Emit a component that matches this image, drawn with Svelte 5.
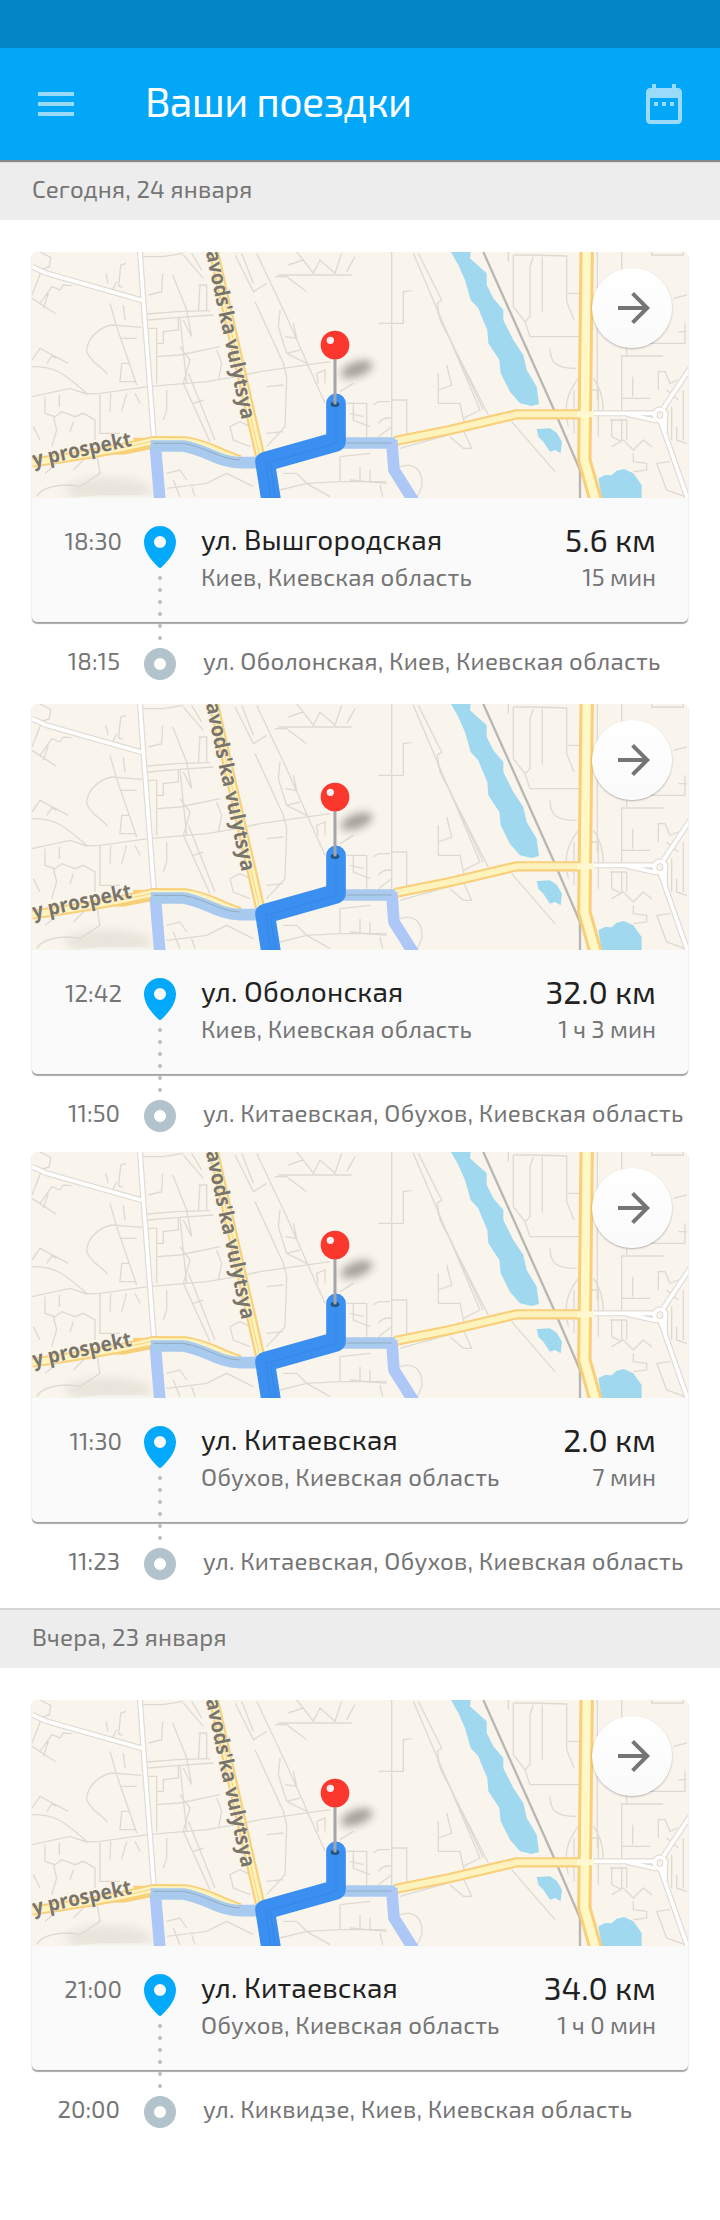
<script>
  const days = [
    {
      label: 'Сегодня, 24 января',
      trips: [
        { end: '18:30', street: 'ул. Вышгородская', area: 'Киев, Киевская область', distance: '5.6 км', duration: '15 мин', start: '18:15', from: 'ул. Оболонская, Киев, Киевская область' },
        { end: '12:42', street: 'ул. Оболонская', area: 'Киев, Киевская область', distance: '32.0 км', duration: '1 ч 3 мин', start: '11:50', from: 'ул. Китаевская, Обухов, Киевская область' },
        { end: '11:30', street: 'ул. Китаевская', area: 'Обухов, Киевская область', distance: '2.0 км', duration: '7 мин', start: '11:23', from: 'ул. Китаевская, Обухов, Киевская область' }
      ]
    },
    {
      label: 'Вчера, 23 января',
      trips: [
        { end: '21:00', street: 'ул. Китаевская', area: 'Обухов, Киевская область', distance: '34.0 км', duration: '1 ч 0 мин', start: '20:00', from: 'ул. Киквидзе, Киев, Киевская область' }
      ]
    }
  ];
  const dots = [2, 14, 26, 38, 50, 62];
</script>

<svg class="defs" width="0" height="0" aria-hidden="true">
  <defs>
    <filter id="soft" x="-50%" y="-50%" width="200%" height="200%"><feGaussianBlur stdDeviation="12" /></filter>
    <symbol id="trip-map" viewBox="36 36 1968 738">
      <rect x="36" y="36" width="1968" height="738" fill="#f9f5ed" />
      <ellipse cx="265" cy="750" rx="130" ry="38" fill="#e9e5dc" filter="url(#soft)" />
      <path d="M165 775Q200 766 260 766H370Q395 766 400 775Z" fill="#f6f3ec" />
      <g class="minor">
        <path d="M60 36L92 52L88 80L66 88L36 165M66 88L50 130M36 175L108 222M60 190L96 140L120 150L130 135L155 137M70 205L85 160M318 70L302 76L296 138L310 142M258 100L264 130M278 150L290 125" />
        <path d="M365 50H430L490 40M385 165L425 155L428 100M382 222L470 215L570 212M382 240L480 232L580 225M490 45L550 115M515 40L545 90M458 105L500 210L515 290M535 135H560V210M540 135L535 215M385 265H410V310H430V275L475 270V235M410 310V430M410 350L480 345L600 320M480 235L500 430M515 290L490 240" />
        <path d="M385 440L560 425L650 410L720 395L930 365M36 470L150 445L200 462L240 460L385 440M36 360L60 325L145 370M36 380C110 380 130 400 200 460M80 370L95 348L110 355M365 262L275 255C230 265 200 300 200 335C215 370 240 375 262 402M270 190L290 260L350 435M310 195L315 240M300 295H350M330 370H305L300 425H345M320 460L305 515M345 460L360 490M272 460L270 515" />
        <path d="M75 470V520L105 530L125 515L165 530L190 520L225 540V600M240 460V580H300M100 530L110 570L95 620M60 600L40 560M118 465V500M150 575L160 545M480 320L510 360L490 430L570 605M505 400L585 600M440 450V510L430 540M590 330L605 370L595 420M520 490L550 480" />
        <path d="M645 45L700 155L740 130M665 40L700 130M710 40L800 230L915 490M705 185L790 370L800 410L795 560L740 620M765 110H800L860 155M775 105H995M805 75L850 60L830 36M850 60L880 100L900 60L945 100L965 40M1005 50L980 95M780 210L775 260L800 340L840 330M795 290L830 295L820 250M800 340L860 370M895 430L890 400L915 390V430M630 560L660 545L690 560M630 560L640 600L690 620M740 440L790 435M980 490H1000V540L1050 560M960 455L1000 430M740 580L790 575" />
        <path d="M50 770Q70 735 150 735L180 740L240 700L230 640M75 700L100 680M160 690L200 650M440 745L560 730L620 700L700 740M460 720L480 770M515 740L525 770M440 700L480 690L500 720M780 750L860 730L960 725H1100M960 650V725M960 650L1050 640M860 730L830 700H790M860 730L930 770M700 650L730 700" />
      </g>
      <g class="minor" transform="translate(990)">
        <path d="M125 36V595M85 250H160V155L185 152M190 40L390 510L340 535M205 40L275 180L262 190L270 240L415 525M262 215L400 510M490 45H550L650 48V185L672 240M490 45V200L525 245L540 290H705M550 50L540 80V230L525 245M577 50V215M600 325C600 370 620 385 680 385M655 160H690M475 36V65M685 415C650 460 640 500 655 560M672 450V580M730 415C750 440 760 480 760 510M742 36V480M720 450H745V590" />
        <path d="M815 36V90M905 36V45H1000V36M815 348H940M815 345V510M830 345V325M815 475H900M848 410V470M830 310H1005V250M925 450V395H945L960 430L985 420M1010 165L970 175M1010 275H985M265 400V490H330L345 560M290 375L305 435L265 450M485 545L615 695M300 590L340 625H365L335 560M0 490H50V590M0 520L40 530M70 495L85 485H120M85 550Q100 530 125 535M125 480H170V590M85 590L125 560M0 720L110 730M30 680V720M60 690V730M150 680C200 665 220 700 215 740L200 775M90 735L98 770M150 625L400 555" />
        <path d="M785 620L820 600L850 630L880 600L905 620M850 640V665L890 670V690L850 695M920 670L960 665M920 670L950 750L1005 770M785 540V590L815 605M815 540V600M830 540V600M980 560V600L1010 610M780 540H830M965 500V600M1000 450V600M950 450L985 480" />
      </g>
      <g class="lane-edge"><path d="M36 80L80 100L370 182M360 36L370 180L402 600" /></g>
      <g class="lane"><path d="M36 80L80 100L370 182M360 36L370 180L402 600" /></g>
      <g class="lane-edge" transform="translate(990)"><path d="M730 520H920M830 522L920 542M940 505L1020 385M930 540L1016 785M945 585V520" /><circle cx="930" cy="525" r="17" /></g>
      <g class="lane" transform="translate(990)"><path d="M730 520H920M830 522L920 542M940 505L1020 385M930 540L1016 785M945 585V520" /><circle cx="930" cy="525" r="17" /></g>

      <g fill="#9fd8ef" transform="translate(990)">
        <path d="M303 36H362L360 55L410 100V135L430 175L460 210V240L490 300L520 345L530 390L560 440L567 492L545 498L510 490L480 455L452 400L448 360L415 310L412 270L395 230L385 205L362 180L345 120L325 75Z" />
        <path d="M560 567L600 565L620 578L636 605L632 640L615 630L600 635L580 605L565 590Z" />
        <path d="M745 715L765 705L785 706L800 692L822 687L850 700L875 735V775H755Z" />
      </g>
      <path d="M1390 36L1600 505L1680 690V775" fill="none" stroke="#b9b7b3" stroke-width="7" />

      <g class="gold">
        <path d="M580 30L722 655" />
        <path d="M1125 603L1290 570L1490 523H1695" />
      </g>
      <path class="gold-wide" d="M1700 36L1693 660L1728 785" />
      <path d="M36 668Q180 648 300 625L400 603L500 604C560 612 610 645 660 660" fill="none" stroke="#f9cf79" stroke-width="30" />
      <path d="M250 638L310 640L400 622M340 597L400 598" fill="none" stroke="#f9cf79" stroke-width="8" />
      <g class="cream">
        <path d="M36 668Q180 648 300 625L400 603L500 604C560 612 610 645 660 660" />
        <path d="M580 30L722 655" />
        <path d="M1125 603L1290 570L1490 523H1695" />
      </g>
      <path class="cream-wide" d="M1700 36L1693 660L1728 785" />
      <path d="M1672 523H1722" fill="none" stroke="#fff8d0" stroke-width="18" />
      <path d="M592 90L717 640M300 625L400 603" fill="none" stroke="#f8d280" stroke-width="3" />

      <g fill="none" stroke-linejoin="round" stroke-width="35">
        <path d="M406 618L420 785" stroke="#adc8f7" />
        <path d="M392 618H490C560 630 600 668 660 668H720M950 609H1125" stroke="#a9caef" />
        <path d="M1115 600L1122 690L1182 785" stroke="#adc8f7" />
      </g>
      <path d="M400 610H490C560 622 600 658 660 660M980 609H1115" fill="none" stroke="#92aabd" stroke-width="3" />
      <path d="M754 785L735 665L948 605V490" fill="none" stroke="#3a8ff1" stroke-width="59" stroke-linejoin="round" stroke-linecap="round" />
      <path d="M754 785L738 670L948 610V500M768 785L752 675" fill="none" stroke="#3687e4" stroke-width="3" />

      <g class="road-name">
        <text transform="translate(551 8) rotate(77.9)" textLength="545" lengthAdjust="spacingAndGlyphs">zavods'ka vulytsya</text>
        <text transform="translate(42 680) rotate(-12)" textLength="302" lengthAdjust="spacingAndGlyphs">y prospekt</text>
      </g>

      <ellipse cx="1010" cy="388" rx="50" ry="22" transform="rotate(-20 1010 388)" fill="#77736c" opacity=".65" filter="url(#soft)" />
      <ellipse cx="945" cy="493" rx="13" ry="8" fill="#225383" />
      <path d="M945 350V493" stroke="#a3a5a8" stroke-width="9" />
      <circle cx="945" cy="315" r="43" fill="#fc382e" />
      <circle cx="931" cy="301" r="11" fill="#fff" opacity=".92" />
    </symbol>
  </defs>
</svg>

<div class="screen">
  <div class="status"></div>
  <header>
    <svg class="icon" viewBox="0 0 24 24"><path d="M3 18h18v-2H3v2zm0-5h18v-2H3v2zm0-7v2h18V6H3z" /></svg>
    <h1>Ваши поездки</h1>
    <svg class="icon" viewBox="0 0 24 24"><path d="M9 11H7v2h2v-2zm4 0h-2v2h2v-2zm4 0h-2v2h2v-2zm2-7h-1V2h-2v2H8V2H6v2H5c-1.11 0-1.99.9-1.99 2L3 20c0 1.1.89 2 2 2h14c1.1 0 2-.9 2-2V6c0-1.1-.9-2-2-2zm0 16H5V9h14v11z" /></svg>
  </header>

  {#each days as day}
    <section>
      <h2>{day.label}</h2>
      {#each day.trips as trip}
        <article>
          <div class="card">
            <div class="map">
              <svg width="656" height="246"><use href="#trip-map" width="656" height="246" /></svg>
              <button aria-label="Открыть">
                <svg viewBox="0 0 24 24" width="48" height="48"><path d="M12 4l-1.41 1.41L16.17 11H4v2h12.17l-5.58 5.59L12 20l8-8z" /></svg>
              </button>
            </div>
            <div class="info">
              <time>{trip.end}</time>
              <svg class="pin" viewBox="0 0 32 42" width="32" height="42"><path fill-rule="evenodd" d="M16 0C7 0 0 7 0 16C0 27 9.5 36.5 14.4 41.2Q16 42.6 17.6 41.2C22.5 36.5 32 27 32 16C32 7 25 0 16 0ZM16 10a6 6 0 1 1 0 12a6 6 0 1 1 0-12Z" /></svg>
              <div class="place">
                <div class="street">{trip.street}</div>
                <div class="area">{trip.area}</div>
              </div>
              <div class="stats">
                <div class="distance">{trip.distance}</div>
                <div class="duration">{trip.duration}</div>
              </div>
            </div>
          </div>
          <svg class="dots" width="4" height="64">
            {#each dots as y}<circle cx="2" cy={y} r="2" />{/each}
          </svg>
          <div class="origin">
            <time>{trip.start}</time>
            <span class="ring"></span>
            <span class="from">{trip.from}</span>
          </div>
        </article>
      {/each}
    </section>
  {/each}
</div>

<style>
  :global(body) { margin: 0; background: #fff; }
  .defs { position: absolute; }
  .screen {
    width: 720px;
    height: 2220px;
    overflow: hidden;
    background: #fff;
    color: #757575;
    font: 24px/32px 'Exo 2', Roboto, sans-serif;
    white-space: nowrap;
  }
  .status { height: 48px; background: #0286c5; }
  header {
    position: relative;
    display: flex;
    align-items: center;
    box-sizing: border-box;
    height: 112px;
    padding: 0 32px;
    background: #03a7f8;
    box-shadow: 0 2px 1px rgba(0, 0, 0, .42);
  }
  .icon { width: 48px; height: 48px; fill: #fff; opacity: .6; }
  h1 {
    flex: 1;
    margin: -6px 0 0 65px;
    color: #fff;
    font-size: 41px;
    line-height: 48px;
    font-weight: 400;
    letter-spacing: -.6px;
  }
  h2 {
    box-sizing: border-box;
    height: 60px;
    margin: 0 0 32px;
    padding: 13px 32px;
    background: #ededed;
    font-size: 24px;
    line-height: 32px;
    font-weight: 400;
    letter-spacing: .2px;
  }
  section + section h2 { border-top: 2px solid #d5d5d5; padding-top: 11px; }
  article { position: relative; height: 452px; padding: 0 32px; }
  article:nth-of-type(2) { height: 448px; }
  article:nth-of-type(3) { height: 456px; }
  .card {
    height: 370px;
    border-radius: 5px;
    background: #fafafa;
    box-shadow: 0 2px 1px rgba(0, 0, 0, .3), 0 1px 2px rgba(0, 0, 0, .14);
  }
  .map { position: relative; height: 246px; overflow: hidden; border-radius: 5px 5px 0 0; }
  .map > svg { display: block; }
  button {
    position: absolute;
    top: 16px;
    right: 16px;
    display: flex;
    width: 80px;
    height: 80px;
    padding: 16px 14px 16px 18px;
    border: 0;
    border-radius: 50%;
    background: linear-gradient(#fff, #fafafa);
    box-shadow: 0 1px 2px rgba(0, 0, 0, .3);
  }
  button svg { flex: none; fill: #757575; }
  .info { display: flex; align-items: flex-start; padding: 28px 32px 0 0; }
  time { flex: none; width: 90px; margin-top: -1px; text-align: right; }
  .pin { flex: none; margin-left: 22px; fill: #03a9fc; }
  .place { flex: 1; margin-left: 25px; }
  .street { color: #212121; font-size: 28px; line-height: 32px; letter-spacing: .15px; margin-top: -3px; }
  .area { margin-top: 6px; letter-spacing: .2px; }
  .stats { text-align: right; margin-top: -3px; }
  .distance { color: #212121; font-size: 32px; line-height: 32px; }
  .duration { margin-top: 6px; }
  .dots { position: absolute; left: 158px; top: 324px; fill: #b0c1cb; }
  .origin { display: flex; align-items: center; height: 32px; margin-top: 26px; }
  .origin time { width: 88px; margin-top: -6px; }
  .ring { flex: none; box-sizing: border-box; width: 32px; height: 32px; margin-left: 24px; border: 10px solid #b2c3cc; border-radius: 50%; }
  .from { margin: -6px 0 0 27px; letter-spacing: .22px; }
  .minor { fill: none; stroke: #dedad2; stroke-width: 4; }
  .lane-edge { fill: none; stroke: #dfdbd4; stroke-width: 18; stroke-linejoin: round; }
  .lane { fill: none; stroke: #fff; stroke-width: 11; stroke-linejoin: round; }
  .gold { fill: none; stroke: #f9cf79; stroke-width: 31; stroke-linejoin: round; }
  .gold-wide { fill: none; stroke: #f9cf79; stroke-width: 43; }
  .cream { fill: none; stroke: #fff3bd; stroke-width: 18; stroke-linejoin: round; }
  .cream-wide { fill: none; stroke: #fff8c6; stroke-width: 25; }
  .road-name {
    fill: #79756b;
    stroke: #faf4e5;
    stroke-width: 3px;
    paint-order: stroke;
    font: 700 62px 'Open Sans', sans-serif;
  }
</style>
